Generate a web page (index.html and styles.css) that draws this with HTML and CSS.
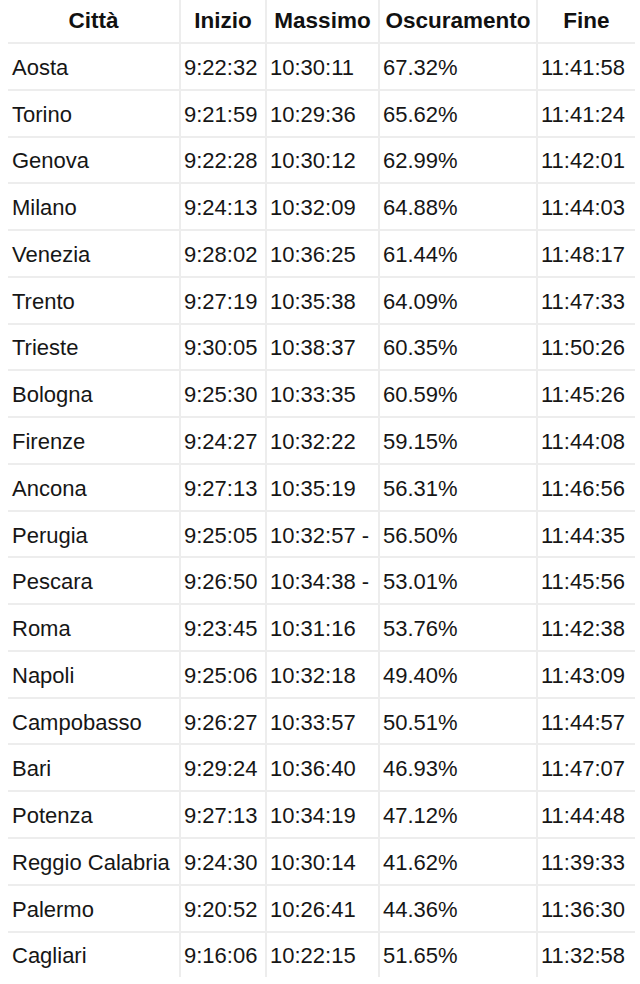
FILE: index.html
```html
<!DOCTYPE html>
<html lang="it">
<head>
<meta charset="utf-8">
<title>Eclissi</title>
<link rel="stylesheet" href="styles.css">
</head>
<body>
<table class="eclipse">
<colgroup>
<col class="c-city"><col class="c-start"><col class="c-max"><col class="c-obs"><col class="c-end">
</colgroup>
<thead>
<tr><th>Città</th><th>Inizio</th><th>Massimo</th><th>Oscuramento</th><th>Fine</th></tr>
</thead>
<tbody>
<tr><td>Aosta</td><td>9:22:32</td><td>10:30:11</td><td>67.32%</td><td>11:41:58</td></tr>
<tr><td>Torino</td><td>9:21:59</td><td>10:29:36</td><td>65.62%</td><td>11:41:24</td></tr>
<tr><td>Genova</td><td>9:22:28</td><td>10:30:12</td><td>62.99%</td><td>11:42:01</td></tr>
<tr><td>Milano</td><td>9:24:13</td><td>10:32:09</td><td>64.88%</td><td>11:44:03</td></tr>
<tr><td>Venezia</td><td>9:28:02</td><td>10:36:25</td><td>61.44%</td><td>11:48:17</td></tr>
<tr><td>Trento</td><td>9:27:19</td><td>10:35:38</td><td>64.09%</td><td>11:47:33</td></tr>
<tr><td>Trieste</td><td>9:30:05</td><td>10:38:37</td><td>60.35%</td><td>11:50:26</td></tr>
<tr><td>Bologna</td><td>9:25:30</td><td>10:33:35</td><td>60.59%</td><td>11:45:26</td></tr>
<tr><td>Firenze</td><td>9:24:27</td><td>10:32:22</td><td>59.15%</td><td>11:44:08</td></tr>
<tr><td>Ancona</td><td>9:27:13</td><td>10:35:19</td><td>56.31%</td><td>11:46:56</td></tr>
<tr><td>Perugia</td><td>9:25:05</td><td>10:32:57 -</td><td>56.50%</td><td>11:44:35</td></tr>
<tr><td>Pescara</td><td>9:26:50</td><td>10:34:38 -</td><td>53.01%</td><td>11:45:56</td></tr>
<tr><td>Roma</td><td>9:23:45</td><td>10:31:16</td><td>53.76%</td><td>11:42:38</td></tr>
<tr><td>Napoli</td><td>9:25:06</td><td>10:32:18</td><td>49.40%</td><td>11:43:09</td></tr>
<tr><td>Campobasso</td><td>9:26:27</td><td>10:33:57</td><td>50.51%</td><td>11:44:57</td></tr>
<tr><td>Bari</td><td>9:29:24</td><td>10:36:40</td><td>46.93%</td><td>11:47:07</td></tr>
<tr><td>Potenza</td><td>9:27:13</td><td>10:34:19</td><td>47.12%</td><td>11:44:48</td></tr>
<tr><td>Reggio Calabria</td><td>9:24:30</td><td>10:30:14</td><td>41.62%</td><td>11:39:33</td></tr>
<tr><td>Palermo</td><td>9:20:52</td><td>10:26:41</td><td>44.36%</td><td>11:36:30</td></tr>
<tr><td>Cagliari</td><td>9:16:06</td><td>10:22:15</td><td>51.65%</td><td>11:32:58</td></tr>
</tbody>
</table>
</body>
</html>
```
FILE: styles.css
```css
html, body {
  margin: 0;
  padding: 0;
  background: #fff;
}
body {
  padding-left: 8px;
  font-family: "Liberation Sans", Arial, sans-serif;
  color: #161616;
}
.eclipse {
  border-collapse: collapse;
  table-layout: fixed;
  width: 627px;
  font-size: 22px;
}
.c-city { width: 172px; }
.c-start { width: 86px; }
.c-max { width: 113px; }
.c-obs { width: 158px; }
.c-end { width: 98px; }
.eclipse th,
.eclipse td {
  padding: 0 0 0 4px;
  border-left: 2px solid #ededed;
  border-bottom: 2px solid #ededed;
  white-space: nowrap;
  overflow: hidden;
  vertical-align: middle;
  line-height: 1;
}
.eclipse th:first-child,
.eclipse td:first-child {
  border-left: none;
}
.eclipse tbody tr:last-child td {
  border-bottom: none;
}
.eclipse th {
  height: 42px;
  text-align: center;
  font-size: 22.5px;
  font-weight: bold;
  color: #111;
  padding-left: 0;
}
.eclipse td {
  height: 41.77px;
  padding-top: 3px;
  text-align: left;
}
.eclipse td:nth-child(n+2) {
  padding-left: 3px;
}
```
